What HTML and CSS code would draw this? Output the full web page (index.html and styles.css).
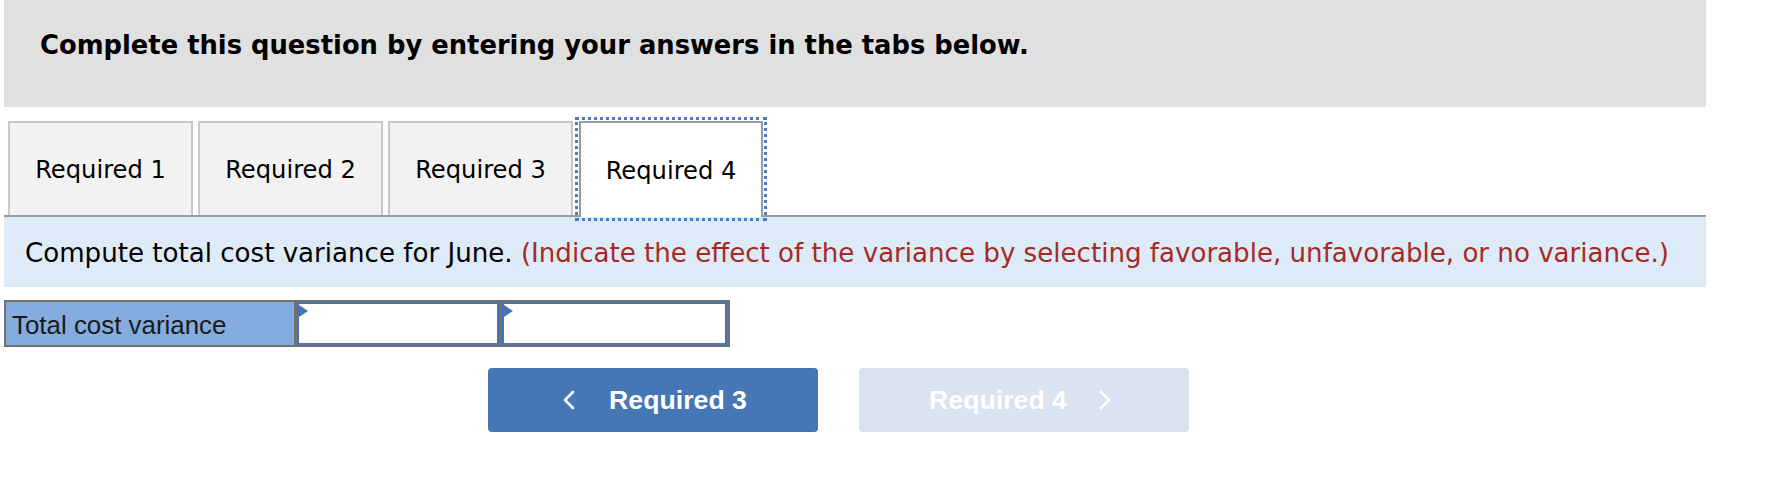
FILE: index.html
```html
<!DOCTYPE html>
<html>
<head>
<meta charset="utf-8">
<link rel="stylesheet" href="styles.css">
</head>
<body>
<div class="page">
  <div class="header">
    <h1 class="header-title">Complete this question by entering your answers in the tabs below.</h1>
  </div>
  <div class="tabs">
    <div class="tab">Required 1</div>
    <div class="tab">Required 2</div>
    <div class="tab">Required 3</div>
    <div class="tab tab-active">Required 4</div>
  </div>
  <div class="prompt">
    <p class="prompt-text">Compute total cost variance for June. <span class="hint">(Indicate the effect of the variance by selecting favorable, unfavorable, or no variance.)</span></p>
  </div>
  <div class="answer-table">
    <div class="cell-label">Total cost variance</div>
    <div class="cell-input cell-amount"><span class="flag"></span></div>
    <div class="cell-input cell-effect"><span class="flag"></span></div>
  </div>
  <div class="nav">
    <button class="nav-btn nav-prev">
      <svg class="chev" width="14" height="20" viewBox="0 0 14 20"><polyline points="11,2 3,10 11,18" fill="none" stroke="#fff" stroke-width="2.6" stroke-linecap="round" stroke-linejoin="round"/></svg>
      <span>Required 3</span>
    </button>
    <button class="nav-btn nav-next" disabled>
      <span>Required 4</span>
      <svg class="chev" width="14" height="20" viewBox="0 0 14 20"><polyline points="3,2 11,10 3,18" fill="none" stroke="#fff" stroke-width="2.6" stroke-linecap="round" stroke-linejoin="round"/></svg>
    </button>
  </div>
</div>
</body>
</html>
```

FILE: styles.css
```css
* { box-sizing: border-box; }
html, body { margin: 0; padding: 0; background: #fff; }
body { font-family: "DejaVu Sans", Verdana, sans-serif; color: #000; }

.page {
  width: 1710px;
  padding-left: 4px;
}

.header {
  width: 1702px;
  height: 107px;
  background: #e0e0e0;
  padding: 27px 0 0 36px;
}
.header-title {
  margin: 0;
  font-size: 25.8px;
  line-height: 36px;
  font-weight: bold;
}

.tabs {
  width: 1702px;
  display: flex;
  gap: 5px;
  padding: 0 0 0 4px;
  margin-top: 14px;
  border-bottom: 2px solid #9a9a9a;
  height: 96px;
}
.tab {
  width: 185px;
  height: 94px;
  background: #f2f2f2;
  border: 2px solid #c8c8c8;
  border-bottom: none;
  display: flex;
  align-items: center;
  justify-content: center;
  font-size: 24.2px;
  padding-top: 2px;
}
.tab-active {
  margin-left: 1px;
  width: 184px;
  height: 96px;
  background: #fff;
  border-color: #9a9a9a;
  outline: 3px dotted #4a7cc4;
  outline-offset: 1px;
  position: relative;
  z-index: 1;
}

.prompt {
  width: 1702px;
  height: 70px;
  background: #ddebf8;
  padding-left: 21px;
  display: flex;
  align-items: center;
}
.prompt-text {
  margin: 0;
  font-size: 26.1px;
  padding-top: 2px;
}
.hint { color: #a52a26; }

.answer-table {
  margin-top: 13px;
  display: flex;
  gap: 3px;
  width: 726px;
  height: 47px;
  border: 2px solid #717171;
  background: #717171;
}
.cell-label {
  width: 288px;
  background: #84acdf;
  font-family: "Liberation Sans", Arial, sans-serif;
  font-size: 25.9px;
  color: #1a1a1a;
  display: flex;
  align-items: center;
  padding: 3px 0 0 6px;
}
.cell-input {
  position: relative;
  background: #fff;
  border: 2px solid #4673b5;
}
.cell-amount { width: 202px; }
.cell-effect { width: 225px; }
.flag {
  position: absolute;
  left: 0;
  top: 1px;
  width: 0;
  height: 0;
  border-top: 6.5px solid transparent;
  border-bottom: 6.5px solid transparent;
  border-left: 9px solid #4673b5;
}

.nav {
  display: flex;
  gap: 41px;
  margin-top: 21px;
  padding-left: 484px;
}
.nav-btn {
  width: 330px;
  height: 64px;
  border: none;
  border-radius: 4px;
  display: flex;
  align-items: center;
  justify-content: center;
  gap: 33px;
  font-family: "Liberation Sans", Arial, sans-serif;
  font-weight: bold;
  font-size: 26.7px;
  color: #fff;
  padding: 0;
}
.nav-prev { background: #4676b4; padding-left: 3px; }
.nav-next { background: #dae3ef; padding-right: 7px; gap: 31px; }
.chev { display: block; }
```
